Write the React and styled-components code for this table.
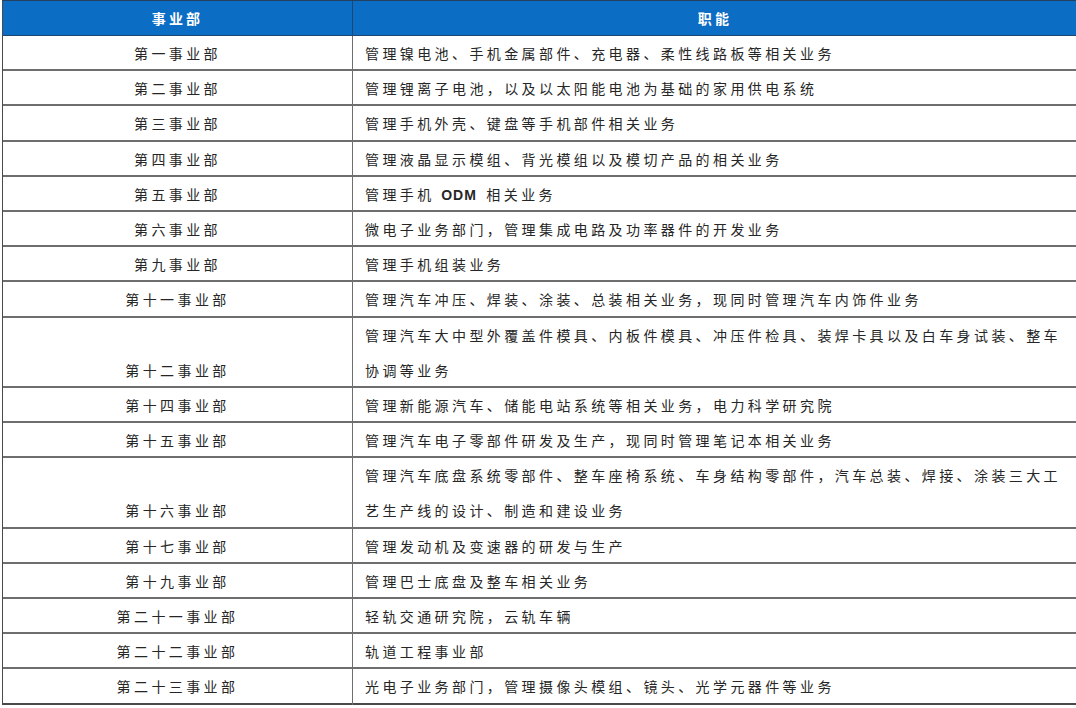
import React from 'react'
import styled, { createGlobalStyle } from 'styled-components'

const GlobalStyle = createGlobalStyle`
  html, body {
    margin: 0;
    padding: 0;
    background: #ffffff;
  }
  body {
    font-family: "Noto Sans CJK SC", "Liberation Sans", sans-serif;
  }
`

const LINE = 35.2

const Page = styled.div`
  padding: 0 0 0 2px;
`

const Table = styled.div`
  width: 1074px;
  border-left: 1px solid #4a4a4a;
  border-top: 1px solid #23405f;
`

const HeaderRow = styled.div`
  display: grid;
  grid-template-columns: 349px 1fr;
  height: 35px;
  background: #0c6dc5;
  border-bottom: 1px solid #1f4670;
  box-sizing: border-box;
`

const HeaderCell = styled.div`
  display: flex;
  align-items: center;
  justify-content: center;
  color: #ffffff;
  font-size: 14px;
  font-weight: 700;
  letter-spacing: 3.2px;
  border-left: ${p => (p.divider ? '1px solid #1f4670' : 'none')};
`

const Row = styled.div`
  display: grid;
  grid-template-columns: 349px 1fr;
  height: ${p => p.lines * LINE}px;
  box-sizing: border-box;
  border-bottom: 2px solid #6e6e6e;
  &:last-child {
    border-bottom-color: #4a4a4a;
  }
`

const NameCell = styled.div`
  display: flex;
  align-items: flex-end;
  justify-content: center;
  line-height: ${LINE}px;
  height: ${p => p.lines * LINE}px;
  font-size: 14px;
  letter-spacing: 3.4px;
  color: #262626;
`

const DutyCell = styled.div`
  border-left: 1.5px solid #6e6e6e;
  padding-left: 12px;
  line-height: ${LINE}px;
  font-size: 14px;
  letter-spacing: 3.4px;
  color: #262626;
  white-space: nowrap;
`

const Latin = styled.b`
  font-family: "Liberation Sans", sans-serif;
  font-weight: 700;
  letter-spacing: 1px;
  margin-right: 3px;
`

const rows = [
  { name: '第一事业部', duty: ['管理镍电池、手机金属部件、充电器、柔性线路板等相关业务'] },
  { name: '第二事业部', duty: ['管理锂离子电池，以及以太阳能电池为基础的家用供电系统'] },
  { name: '第三事业部', duty: ['管理手机外壳、键盘等手机部件相关业务'] },
  { name: '第四事业部', duty: ['管理液晶显示模组、背光模组以及模切产品的相关业务'] },
  { name: '第五事业部', odm: true },
  { name: '第六事业部', duty: ['微电子业务部门，管理集成电路及功率器件的开发业务'] },
  { name: '第九事业部', duty: ['管理手机组装业务'] },
  { name: '第十一事业部', duty: ['管理汽车冲压、焊装、涂装、总装相关业务，现同时管理汽车内饰件业务'] },
  {
    name: '第十二事业部',
    duty: [
      '管理汽车大中型外覆盖件模具、内板件模具、冲压件检具、装焊卡具以及白车身试装、整车',
      '协调等业务',
    ],
  },
  { name: '第十四事业部', duty: ['管理新能源汽车、储能电站系统等相关业务，电力科学研究院'] },
  { name: '第十五事业部', duty: ['管理汽车电子零部件研发及生产，现同时管理笔记本相关业务'] },
  {
    name: '第十六事业部',
    duty: [
      '管理汽车底盘系统零部件、整车座椅系统、车身结构零部件，汽车总装、焊接、涂装三大工',
      '艺生产线的设计、制造和建设业务',
    ],
  },
  { name: '第十七事业部', duty: ['管理发动机及变速器的研发与生产'] },
  { name: '第十九事业部', duty: ['管理巴士底盘及整车相关业务'] },
  { name: '第二十一事业部', duty: ['轻轨交通研究院，云轨车辆'] },
  { name: '第二十二事业部', duty: ['轨道工程事业部'] },
  { name: '第二十三事业部', duty: ['光电子业务部门，管理摄像头模组、镜头、光学元器件等业务'] },
]

const DivisionRow = ({ row }) => {
  const lines = row.duty ? row.duty.length : 1
  return (
    <Row lines={lines}>
      <NameCell lines={lines}>{row.name}</NameCell>
      <DutyCell>
        {row.odm ? (
          <>管理手机 <Latin>ODM</Latin> 相关业务</>
        ) : (
          row.duty.map((line, i) => <div key={i}>{line}</div>)
        )}
      </DutyCell>
    </Row>
  )
}

const App = () => (
  <Page>
    <GlobalStyle />
    <Table>
      <HeaderRow>
        <HeaderCell>事业部</HeaderCell>
        <HeaderCell divider>职能</HeaderCell>
      </HeaderRow>
      {rows.map(row => (
        <DivisionRow key={row.name} row={row} />
      ))}
    </Table>
  </Page>
)

export default App
